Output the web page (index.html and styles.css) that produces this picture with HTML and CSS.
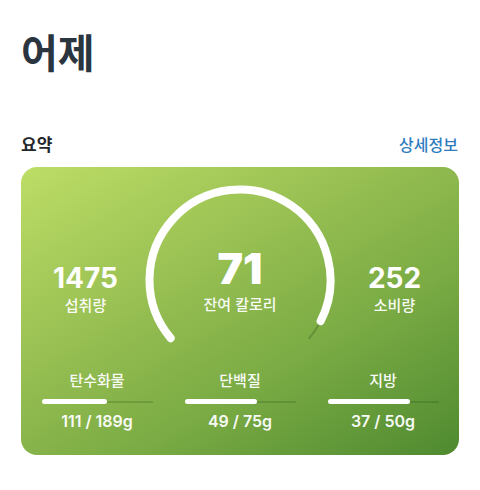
FILE: index.html
```html
<!DOCTYPE html>
<html lang="ko">
<head>
<meta charset="utf-8">
<link rel="stylesheet" href="styles.css">
</head>
<body>
<main class="page">
  <h1 class="title">어제</h1>
  <div class="section-head">
    <h2 class="section-title">요약</h2>
    <a class="more" href="#">상세정보</a>
  </div>
  <section class="card">
    <div class="top-row">
      <div class="stat">
        <div class="stat-num">1475</div>
        <div class="stat-label">섭취량</div>
      </div>
      <div class="gauge">
        <svg class="gauge-svg" width="200" height="160" viewBox="0 0 200 160">
          <path d="M30.67 153.17 A90.5 90.5 0 1 1 169.33 153.17" fill="none" stroke="rgba(40,70,20,0.28)" stroke-width="2" stroke-linecap="round"/>
          <path d="M30.67 153.17 A90.5 90.5 0 1 1 180.64 136.09" fill="none" stroke="#ffffff" stroke-width="8" stroke-linecap="round"/>
        </svg>
        <div class="gauge-text">
          <div class="gauge-num">71</div>
          <div class="gauge-label">잔여 칼로리</div>
        </div>
      </div>
      <div class="stat">
        <div class="stat-num">252</div>
        <div class="stat-label">소비량</div>
      </div>
    </div>
    <div class="macros">
      <div class="macro">
        <div class="macro-label">탄수화물</div>
        <div class="bar"><div class="bar-fill" style="width:58.7%"></div></div>
        <div class="macro-value">111 / 189g</div>
      </div>
      <div class="macro">
        <div class="macro-label">단백질</div>
        <div class="bar"><div class="bar-fill" style="width:65.3%"></div></div>
        <div class="macro-value">49 / 75g</div>
      </div>
      <div class="macro">
        <div class="macro-label">지방</div>
        <div class="bar"><div class="bar-fill" style="width:74%"></div></div>
        <div class="macro-value">37 / 50g</div>
      </div>
    </div>
  </section>
</main>
</body>
</html>
```

FILE: styles.css
```css
* { box-sizing: border-box; }
html, body { margin: 0; padding: 0; background: #ffffff; }
body {
  font-family: Inter, "Noto Sans CJK KR", sans-serif;
  width: 480px;
  height: 490px;
  overflow: hidden;
}
.page {
  padding: 0 21px 0 21px;
}
.title {
  margin: 0;
  padding-top: 23px;
  font-family: "Noto Sans CJK KR", sans-serif;
  font-size: 40px;
  font-weight: 700;
  line-height: 56px;
  color: #2b3540;
  letter-spacing: 0px;
}
.section-head {
  display: flex;
  justify-content: space-between;
  align-items: center;
  margin-top: 53px;
  height: 24px;
}
.section-title {
  margin: 0;
  font-family: "Noto Sans CJK KR", sans-serif;
  font-size: 17px;
  font-weight: 700;
  color: #23272b;
  line-height: 24px;
}
.more {
  font-family: "Noto Sans CJK KR", sans-serif;
  font-size: 16px;
  font-weight: 500;
  color: #2f7dbf;
  text-decoration: none;
  line-height: 24px;
  margin-right: 1px;
}
.card {
  margin-top: 11px;
  height: 288px;
  border-radius: 16px;
  background: linear-gradient(150deg, #bddd66 0%, #97bf52 38%, #7aab44 65%, #4f8a30 100%);
  padding-top: 18px;
  color: #ffffff;
}
.top-row {
  display: grid;
  grid-template-columns: 1fr 200px 1fr;
  padding: 0 10px;
}
.stat {
  display: flex;
  flex-direction: column;
  align-items: center;
  padding-top: 77px;
}
.stat-num {
  font-size: 28px;
  font-weight: 700;
  line-height: 32px;
}
.stat-label {
  font-family: "Noto Sans CJK KR", sans-serif;
  font-size: 15px;
  font-weight: 500;
  line-height: 22px;
  margin-top: 0px;
  opacity: 0.95;
}
.gauge {
  display: grid;
  justify-items: center;
}
.gauge-svg {
  grid-area: 1 / 1;
  display: block;
}
.gauge-text {
  grid-area: 1 / 1;
  display: flex;
  flex-direction: column;
  align-items: center;
  padding-top: 58px;
}
.gauge-num {
  font-size: 43px;
  font-weight: 900;
  line-height: 50px;
}
.gauge-label {
  font-family: "Noto Sans CJK KR", sans-serif;
  font-size: 15px;
  font-weight: 500;
  line-height: 22px;
  opacity: 0.95;
}
.macros {
  display: grid;
  grid-template-columns: repeat(3, 111px);
  column-gap: 32px;
  justify-content: center;
  margin-top: 24px;
}
.macro {
  display: flex;
  flex-direction: column;
  align-items: center;
}
.macro-label {
  font-family: "Noto Sans CJK KR", sans-serif;
  font-size: 15px;
  font-weight: 500;
  line-height: 22px;
  opacity: 0.95;
}
.bar {
  width: 111px;
  height: 5px;
  margin-top: 8px;
  display: flex;
  align-items: center;
  background: linear-gradient(rgba(40,70,20,0.22), rgba(40,70,20,0.22)) center / 100% 2px no-repeat;
}
.bar-fill {
  height: 5px;
  border-radius: 3px;
  background: #ffffff;
}
.macro-value {
  font-size: 16px;
  font-weight: 600;
  line-height: 22px;
  margin-top: 6px;
  opacity: 0.95;
}
```
